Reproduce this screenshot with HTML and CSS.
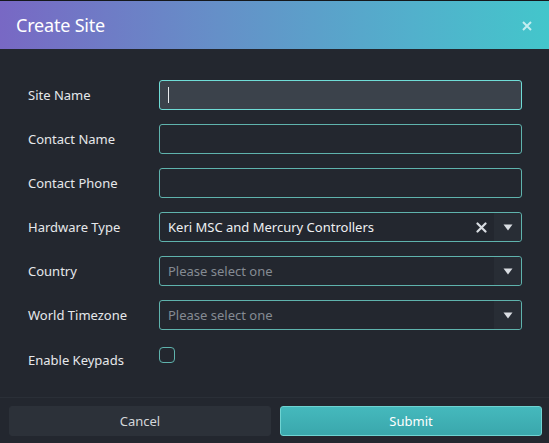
FILE: index.html
```html
<!DOCTYPE html>
<html>
<head>
<meta charset="utf-8">
<link rel="stylesheet" href="styles.css">
</head>
<body>
<div class="dialog">
  <div class="header">
    <span class="title">Create Site</span>
    <span class="close"><svg width="10" height="10" viewBox="0 0 10 10"><path d="M1 1L9 9M9 1L1 9" stroke="#c4eef0" stroke-width="2"/></svg></span>
  </div>
  <div class="body">
    <div class="row">
      <label class="label">Site Name</label>
      <div class="input focused"><span class="caret"></span></div>
    </div>
    <div class="row">
      <label class="label">Contact Name</label>
      <div class="input"></div>
    </div>
    <div class="row">
      <label class="label">Contact Phone</label>
      <div class="input"></div>
    </div>
    <div class="row">
      <label class="label">Hardware Type</label>
      <div class="input select">
        <span class="value">Keri MSC and Mercury Controllers</span>
        <span class="clear"><svg width="11" height="11" viewBox="0 0 11 11"><path d="M1.5 1.5L9.5 9.5M9.5 1.5L1.5 9.5" stroke="#d9dde2" stroke-width="2.2" stroke-linecap="round"/></svg></span>
        <span class="arrow"><svg width="10" height="7" viewBox="0 0 10 7"><path d="M0.5 0.5H9.5L5 6.5Z" fill="#d9dde2"/></svg></span>
      </div>
    </div>
    <div class="row">
      <label class="label">Country</label>
      <div class="input select">
        <span class="value placeholder">Please select one</span>
        <span class="arrow"><svg width="10" height="7" viewBox="0 0 10 7"><path d="M0.5 0.5H9.5L5 6.5Z" fill="#d9dde2"/></svg></span>
      </div>
    </div>
    <div class="row">
      <label class="label">World Timezone</label>
      <div class="input select">
        <span class="value placeholder">Please select one</span>
        <span class="arrow"><svg width="10" height="7" viewBox="0 0 10 7"><path d="M0.5 0.5H9.5L5 6.5Z" fill="#d9dde2"/></svg></span>
      </div>
    </div>
    <div class="row check-row">
      <label class="label">Enable Keypads</label>
      <div class="checkbox"></div>
    </div>
  </div>
  <div class="footer">
    <button class="btn cancel">Cancel</button>
    <button class="btn submit">Submit</button>
  </div>
</div>
</body>
</html>
```

FILE: styles.css
```css
* { box-sizing: border-box; }
html, body {
  margin: 0;
  padding: 0;
  background: #23272f;
}
body {
  font-family: "Noto Sans", "Open Sans", sans-serif;
  color: #e6e8eb;
  width: 549px;
  height: 443px;
  overflow: hidden;
}
.dialog {
  display: flex;
  flex-direction: column;
  height: 443px;
  background: #23272f;
  border-top: 1px solid #15181c;
}
.header {
  height: 48px;
  display: flex;
  align-items: center;
  justify-content: space-between;
  padding: 0 17px 0 16px;
  background: linear-gradient(90deg, #7868c4 0%, #6590c8 40%, #52b0cc 75%, #43c6cb 100%);
}
.title {
  font-size: 18px;
  color: #ffffff;
  letter-spacing: -0.2px;
}
.close {
  display: flex;
  align-items: center;
  margin-top: 1px;
}
.body {
  padding: 31px 27px 0 28px;
  display: flex;
  flex-direction: column;
  gap: 14px;
  flex: 1;
}
.row {
  display: flex;
  align-items: center;
  height: 30px;
}
.label {
  width: 131px;
  font-size: 13px;
  color: #e6e8eb;
}
.input {
  width: 363px;
  height: 30px;
  border: 1px solid #5fb3ad;
  border-radius: 3px;
  display: flex;
  align-items: center;
  padding-left: 8px;
  background: #23272f;
}
.input.focused {
  background: #3b424b;
  border-color: #6fdcd6;
}
.caret {
  width: 1px;
  height: 16px;
  background: #e8eaed;
}
.select {
  padding-left: 0;
}
.value {
  flex: 1;
  padding-left: 8px;
  font-size: 13px;
  color: #eef0f2;
}
.placeholder {
  color: #858b93;
}
.clear {
  width: 26px;
  display: flex;
  justify-content: center;
  align-items: center;
}
.arrow {
  width: 27px;
  align-self: stretch;
  display: flex;
  justify-content: center;
  align-items: center;
  background: #282d35;
  border-radius: 0 3px 3px 0;
}
.check-row {
  align-items: flex-start;
}
.check-row .label {
  margin-top: 7px;
}
.checkbox {
  width: 16px;
  height: 16px;
  border: 1.5px solid #5fb3ad;
  border-radius: 4px;
  margin-top: 3px;
}
.footer {
  border-top: 1px solid #2a2f37;
  height: 46px;
  display: flex;
  gap: 9px;
  padding: 8px 7px 7px 9px;
}
.btn {
  flex: 1;
  height: 30px;
  border-radius: 3px;
  font-family: "Noto Sans", "Open Sans", sans-serif;
  font-size: 13px;
}
.cancel {
  background: #2c3139;
  border: 1px solid #2c3139;
  color: #d4d7db;
}
.submit {
  background: linear-gradient(180deg, #45b9bd, #3aa7ac);
  border: 1px solid #6fd3d2;
  color: #ffffff;
}
```
